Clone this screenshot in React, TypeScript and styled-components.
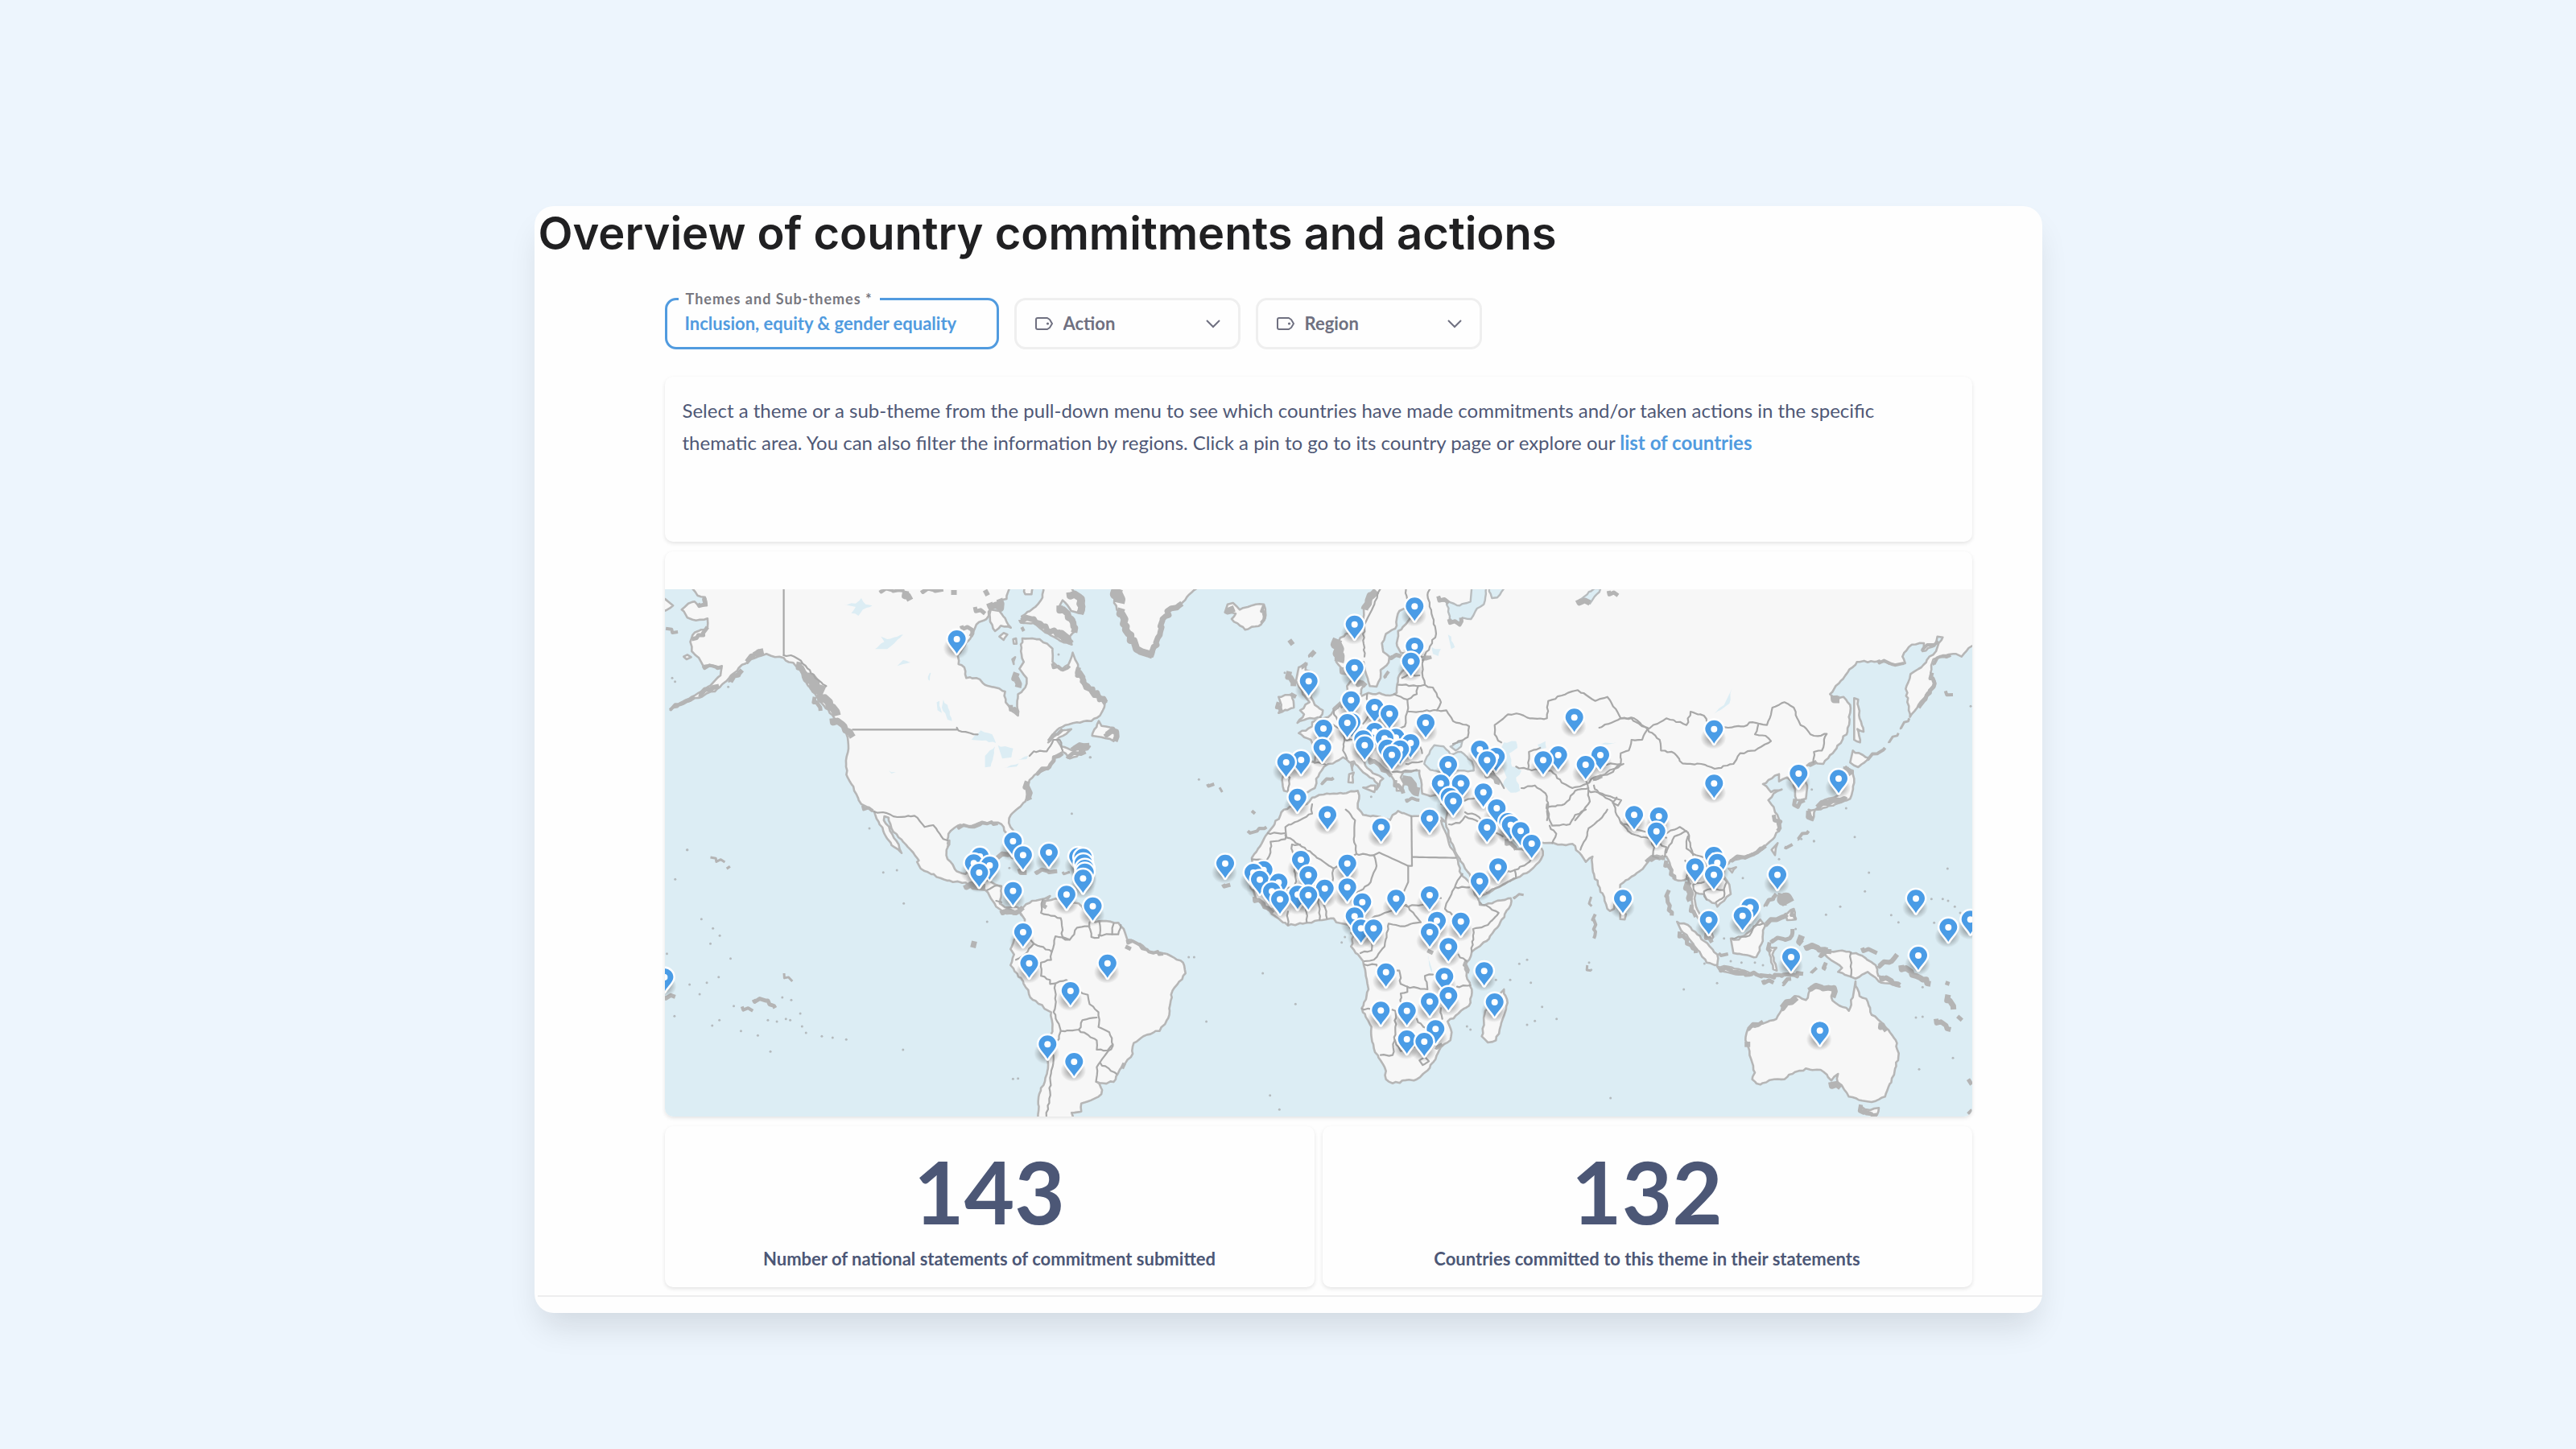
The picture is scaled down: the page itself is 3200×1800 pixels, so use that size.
import React from "react";
import styled, { createGlobalStyle } from "styled-components";

const GlobalStyle = createGlobalStyle`
  *, *::before, *::after { box-sizing: border-box; }
  body {
    margin: 0;
    background: #edf5fd;
    font-family: Lato, "Liberation Sans", sans-serif;
    color: #4f5876;
  }
`;

const Page = styled.main`
  display: flex;
  justify-content: center;
  min-height: 100vh;
  padding: 256px 24px 120px;
`;

const Sheet = styled.article`
  display: flex;
  flex-direction: column;
  align-self: flex-start;
  width: 100%;
  max-width: 1873px;
  padding-bottom: 20px;
  border-radius: 24px;
  background: #fefefe;
  box-shadow: 0 24px 40px -8px rgba(10, 20, 20, 0.12);
`;

const Title = styled.h1`
  margin: 0;
  padding: 0 5px;
  font-family: Inter, "Liberation Sans", sans-serif;
  font-size: 56px;
  line-height: 68px;
  font-weight: 600;
  color: #202022;
`;

const Content = styled.div`
  display: flex;
  flex-direction: column;
  gap: 12px;
  padding: 46px 87px 10px 162px;
`;

const Filters = styled.form`
  display: flex;
  flex-wrap: wrap;
  gap: 19px;
  margin-bottom: 22px;
`;

const Field = styled.div<{ $active?: boolean }>`
  position: relative;
  display: flex;
  align-items: center;
  width: ${(p) => (p.$active ? 415 : 281)}px;
  height: 64px;
  border: 3px solid ${(p) => (p.$active ? "#519bdf" : "#efefef")};
  border-radius: 14px;
  color: ${(p) => (p.$active ? "#519bdf" : "#6f7080")};
`;

const FloatingLabel = styled.label`
  position: absolute;
  top: -12px;
  left: 14px;
  padding: 0 9px;
  background: #fefefe;
  font-size: 18px;
  line-height: 20px;
  font-weight: 700;
  letter-spacing: 1px;
  color: #77777f;
`;

const Select = styled.select<{ $inset: number }>`
  appearance: none;
  width: 100%;
  height: 100%;
  padding: 0 40px 0 ${(p) => p.$inset}px;
  border: 0;
  border-radius: 12px;
  background: transparent;
  color: inherit;
  font: 700 22px/28px Lato, "Liberation Sans", sans-serif;
`;

const FieldIcon = styled.svg<{ $end?: boolean }>`
  position: absolute;
  ${(p) => (p.$end ? "right: 22px;" : "left: 23px;")}
  pointer-events: none;
  fill: none;
  stroke: currentColor;
`;

const Panel = styled.section`
  border-radius: 10px;
  background: #fefefe;
  box-shadow: 0 2px 5px rgba(0, 0, 0, 0.11);
`;

const Intro = styled(Panel)`
  min-height: 205px;
  padding: 22px 44px 22px 22px;
`;

const IntroText = styled.p`
  margin: 0;
  font-size: 24px;
  line-height: 40px;
`;

const Link = styled.a`
  color: #519bdf;
  font-weight: 700;
  text-decoration: none;
`;

const MapPanel = styled(Panel)`
  padding-top: 47px;
  overflow: hidden;
`;

const MapDrawing = styled.svg`
  display: block;
  width: 100%;
  height: auto;
  background: #dcedf4;
`;

const Stats = styled.div`
  display: grid;
  grid-template-columns: 1fr 1fr;
  gap: 10px;
`;

const Stat = styled(Panel)`
  display: flex;
  flex-direction: column;
  align-items: center;
  gap: 6px;
  padding: 16px 16px 20px;
`;

const StatNumber = styled.strong`
  font-size: 108px;
  line-height: 128px;
  font-weight: 700;
  color: #4c5776;
`;

const StatLabel = styled.span`
  font-size: 22px;
  line-height: 30px;
  font-weight: 700;
  color: #4c5776;
`;

const Divider = styled.hr`
  align-self: stretch;
  height: 2px;
  margin: 0 0 0 4px;
  border: 0;
  background: #ededee;
`;

/* ---------- Map geometry ---------- */

type Point = [number, number];

/* Shapes are digitised per map sheet; each sheet has its own origin and scale. */
const sheet =
  (ox: number, oy: number, sx: number, sy = 3) =>
  (text: string): Point[] =>
    text
      .trim()
      .split(/\s+/)
      .map((pair) => {
        const [x, y] = pair.split(",").map(Number);
        return [ox + x / sx, oy + y / sy];
      });

const NA = sheet(820, 720, 2.8);
const SA = sheet(820, 1040, 2.24);
const AT = sheet(1340, 720, 3);
const AF = sheet(1500, 1000, 3);
const EU = sheet(1560, 720, 3);
const AS = sheet(1980, 720, 3);
const OC = sheet(1960, 1040, 3);

/* Breaks long coast segments into small irregular steps, always the same way. */
const roughen = (points: Point[], amount: number): Point[] => {
  let seed = 7;
  const random = () => {
    seed = (seed * 16807) % 2147483647;
    return seed / 2147483647 - 0.5;
  };
  const out: Point[] = [];
  points.forEach((a, i) => {
    out.push(a);
    const b = points[i + 1];
    if (!b) return;
    const length = Math.hypot(b[0] - a[0], b[1] - a[1]);
    const steps = Math.min(24, Math.floor(length / 4));
    for (let s = 1; s < steps; s++) {
      out.push([
        a[0] + ((b[0] - a[0]) * s) / steps + random() * amount,
        a[1] + ((b[1] - a[1]) * s) / steps + random() * amount,
      ]);
    }
  });
  return out;
};

const path = (points: Point[], closed = false, amount = 2.4) =>
  "M" +
  roughen(points, amount)
    .map(([x, y]) => `${x.toFixed(1)} ${y.toFixed(1)}`)
    .join("L") +
  (closed ? "Z" : "");

const land: Point[][] = [
  [
    ...NA("112,0 112,36 130,62 156,68 162,100 132,98 120,85 98,92 75,115 95,145 125,155 165,148 165,182 120,200 105,235 110,270 135,295 150,325 215,325 210,360 175,398 110,440 35,485 60,478 120,445 190,420 240,370 285,320 340,290 370,280 400,292 430,295 480,330 510,390 545,440 590,500 640,560 652,590 655,620 647,690 652,740 675,790 700,840 745,868 760,905 785,960 815,1000 840,1022 830,990 800,940 778,900 780,885 795,890 805,930 845,980 880,1020 900,1050"),
    ...SA("715,95 725,120 780,155 815,170 850,172 870,195 905,200 920,230 935,262 965,288 985,290 1000,280 1012,300 1020,275 985,262 960,265 945,250 950,190 915,165 890,160 905,110 915,75 880,70 865,110 850,140 825,130 800,85 797,50 805,15"),
    ...NA("1000,1000 1003,950 1035,920 1085,920 1120,905 1175,908 1195,925 1215,975 1232,990 1235,950 1213,910 1220,880 1270,830 1285,750 1310,725 1355,700 1370,665 1400,645 1425,670 1470,650 1495,625 1440,640 1395,625 1380,600 1420,570 1430,560 1400,565 1350,610 1370,575 1410,545 1450,535 1500,530 1530,510 1540,490 1550,450 1510,430 1480,390 1460,345 1435,275 1420,320 1395,340 1365,310 1365,260 1320,225 1260,222 1255,270 1265,310 1250,335 1275,370 1270,405 1245,430 1245,510 1220,490 1202,460 1200,420 1130,395 1100,370 1065,370 1058,330 1038,318 1035,285 1060,250 1085,210 1100,170 1135,150 1150,110 1165,90 1205,75 1215,36 1215,0"),
  ],
  NA("0,62 28,85 45,100 20,118 0,125"),
  NA("1335,0 1330,70 1305,105 1258,140 1262,165 1300,165 1340,200 1390,230 1432,245 1425,215 1445,195 1440,150 1390,100 1400,80 1430,120 1470,130 1475,80 1440,50 1420,0"),
  NA("1150,115 1148,160 1165,195 1185,175 1220,182 1205,160 1180,120"),
  NA("1180,215 1195,202 1208,208 1195,228"),
  NA("1228,225 1238,222 1240,242 1230,242"),
  NA("1225,300 1235,292 1230,318"),
  NA("82,290 95,283 108,292 92,300"),
  NA("1268,30 1270,58 1292,58 1298,30"),
  AT("50,585 75,530 85,548 130,555 145,585 130,605 85,590"),
  AT("130,0 132,90 160,150 180,210 215,265 275,290 295,230 315,150 340,110 385,90 410,60 440,36 440,0"),
  AT("545,125 585,130 570,150 620,190 680,170 697,135 690,95 660,95 630,105 600,115 575,90 555,95"),
  SA("1000,280 1012,262 1035,240 1070,232 1085,222 1075,240 1100,232 1165,250 1190,290 1210,320 1240,315 1275,322 1290,345 1300,385 1335,400 1360,430 1410,438 1455,470 1462,510 1440,550 1422,590 1418,650 1405,700 1390,725 1345,745 1318,770 1315,810 1285,860 1262,915 1235,920 1215,915 1230,945 1220,970 1190,988 1172,995 1172,1025 1145,1030 1150,1060 1050,1060 1055,960 1072,900 1080,850 1085,770 1092,700 1088,655 1030,600 1010,540 975,480 985,440 975,420 985,385 1005,350 1015,310"),
  [
    ...AT("1100,0 1100,45 1078,80 1062,110 1060,150 1020,190 975,220 958,250 960,310 985,345 1040,340 1062,310 1068,345 1085,400 1110,402 1125,370 1125,340 1155,312 1158,290 1135,272 1130,240 1145,205 1180,185 1195,120 1215,110 1240,140 1220,168 1190,195 1185,240 1200,275 1240,290 1310,290 1250,312 1205,345 1190,370 1185,410 1185,425 1160,435 1130,430 1080,425 1045,440 1060,400 1050,380 1015,380 1000,400 1000,430 975,465 950,490 930,515 900,525 870,535 870,550 820,575 840,590 865,600 885,650 880,680 830,685 790,680 768,690 760,740 765,790 785,795 810,805 845,800 880,780 885,745 905,715 930,690 960,680 985,665 1010,685 1025,680 1050,710 1085,740 1115,765 1110,785 1120,770 1135,745 1110,730 1075,705 1055,670 1060,650 1085,670 1120,690 1155,720 1175,750 1185,790 1205,790 1215,760 1200,740 1210,720 1250,715 1270,715 1272,740 1280,800 1310,810 1345,805 1370,830 1372,880 1368,905"),
    ...AF("890,85 905,130 930,190 960,240 990,285 1010,330 1015,345 1050,330 1100,300 1150,275 1200,250 1225,225 1250,190 1245,165 1210,165 1180,172 1150,168 1130,140 1100,100 1120,95 1160,110 1200,135 1255,145 1290,145 1320,150 1360,148 1385,180 1410,215 1435,195 1435,240 1455,300 1480,360"),
    ...OC("110,270 120,278 135,270 145,240 160,210 158,180 200,150 250,110 270,85 300,80 330,75 345,110 360,160 385,165 410,155 415,200 425,240 430,280 445,300 480,350 495,390 505,375 490,330 455,290 440,260 435,230 440,210 470,215 480,235 515,250 520,262 545,240 570,215 565,180 545,150 545,120 570,88 600,85 640,70 680,55 715,20"),
    ...AS("690,940 695,905 675,870 670,850 650,825 670,800 700,785 660,795 630,765 650,750 690,728 690,755 720,740 745,760 755,825 790,820 795,780 785,740 790,700 820,682 855,690 890,650 945,570 955,500 955,470 930,440 905,450 880,430 920,380 980,310 1060,308 1110,318 1160,315 1150,290 1185,245 1230,240 1225,270 1270,250 1280,215 1300,218 1285,240 1275,270 1250,290 1220,330 1180,355 1165,400 1168,460 1178,515 1205,480 1235,440 1255,410 1270,380 1255,350 1265,300 1300,285 1350,280 1370,290 1410,250 1470,230 1470,0"),
  ],
  AT("820,330 850,315 845,340 875,350 865,440 880,470 910,490 900,515 850,522 815,537 840,505 825,490 860,460 835,430 810,380"),
  AT("745,440 795,430 802,480 745,500 755,470"),
  AT("1060,778 1105,770 1102,795"),
  AT("1008,728 1025,722 1022,760 1005,758"),
  AT("1015,690 1024,688 1020,715"),
  [
    ...AT("870,815 925,800 985,800 1040,790 1045,820 1040,855 1060,880 1110,885 1160,900 1170,880 1190,865 1240,885 1290,890 1350,890 1365,905"),
    ...AF("870,60 880,90 905,160 930,200 945,260 975,290 1005,345 1015,375 1060,370 1130,350 1130,375 1080,460 1040,510 985,550 960,600 965,640 985,690 980,740 935,780 895,810 910,850 905,880 870,905 850,950 810,1000 780,1025 690,1040 665,1025 660,980 620,910 605,820 575,760 600,690 590,640 580,585 535,530 545,480 525,450 480,440 470,425 440,430 370,442 300,452 240,410 180,350 160,300 165,200 215,120 250,75"),
    ...AT("755,870 800,845 850,840 870,815"),
  ],
  AF("1105,690 1118,740 1100,800 1075,880 1045,888 1022,865 1030,810 1035,770 1060,740"),
  OC("158,285 180,290 175,310 158,308"),
  OC("370,318 410,330 470,390 520,440 520,480 480,470 430,400 385,350"),
  OC("520,485 560,485 620,500 650,517 600,515 530,500"),
  OC("570,380 600,385 650,345 680,310 700,330 690,350 685,400 665,450 580,435"),
  OC("712,410 740,415 725,440 742,500 728,495 715,440"),
  OC("775,290 805,270 812,310 780,312"),
  OC("890,410 940,430 985,425 1060,445 1110,480 1120,520 1200,560 1130,545 1080,505 1035,530 970,505 985,490 930,450"),
  OC("1035,540 1050,595 1075,605 1095,665 1140,700 1185,760 1195,820 1180,880 1145,970 1095,990 1060,985 1010,970 985,930 965,930 970,885 945,910 905,870 850,865 800,885 770,905 715,908 680,925 650,905 660,880 640,800 625,760 635,715 740,680 770,625 810,595 850,610 870,565 955,565 945,600 960,620 1010,650 1025,600"),
  OC("1058,1008 1090,1020 1122,1012 1115,1038 1075,1036"),
  OC("745,25 735,70 722,50"),
  OC("562,120 590,115 575,135"),
  AS("965,640 1025,668 985,702 955,685"),
  AS("940,700 965,715 970,760 955,820 900,840 830,860 850,830 905,810 935,770"),
  AS("800,860 825,860 815,900"),
  AS("970,445 985,450 990,520 1005,570 982,560 992,610 970,600"),
];

const seas: Point[][] = [
  EU("628,690 650,640 665,620 700,625 725,655 765,645 805,680 812,715 740,716 700,722 650,712"),
  EU("725,625 770,602 765,625 745,640"),
  EU("805,30 860,30 850,95 825,110 802,150 770,145 760,175 722,150 712,85 760,100 800,85"),
  EU("870,30 880,72 900,70 925,36 925,30"),
  EU("1262,36 1205,80 1245,92 1285,36"),
];

const lakes: Point[][] = [
  NA("640,95 680,92 700,72 715,95 738,100 705,115 690,138 665,128 680,105"),
  NA("748,262 780,235 768,215 790,225 845,208 815,240 790,262"),
  NA("825,325 845,303 870,312 845,318"),
  NA("932,375 938,350 942,352 938,380"),
  NA("962,460 972,455 980,500 965,490"),
  NA("985,450 1000,470 1015,530 1000,525 980,480"),
  NA("1083,600 1115,565 1155,580 1168,612 1120,603"),
  NA("1130,660 1165,625 1150,700 1130,703"),
  NA("1175,620 1228,632 1222,665 1190,670"),
  NA("1195,705 1248,688 1240,700"),
  NA("1245,675 1280,660 1275,672"),
  NA("795,715 820,720 805,726"),
  EU("925,610 970,605 975,630 945,650 955,700 990,715 970,740 985,790 950,797 920,770 935,740 915,700 935,670 910,640"),
  EU("655,255 690,262 680,288 660,280"),
  EU("716,208 728,215 742,255 728,262"),
  EU("1275,615 1345,610 1310,618"),
  EU("1050,618 1080,605 1082,630 1060,635"),
  AS("515,408 505,465 448,503 490,460"),
  AF("870,520 885,515 885,545 870,545"),
  AF("822,560 832,600 838,630 826,600"),
];

const borders: Point[][] = [
  NA("430,285 455,285 490,305 540,370 578,400"),
  NA("1032,555 1050,570 1105,580"),
  NA("1285,660 1300,643 1345,643 1368,600 1390,600 1400,640"),
  NA("745,868 775,870 825,888 885,883 920,925 950,918 985,970 1000,975"),
  SA("1065,235 1060,285 1115,305 1120,375 1140,385 1160,340 1195,335"),
  SA("1195,320 1200,375 1220,378 1225,350 1222,315"),
  SA("1220,368 1255,365 1275,365 1282,330"),
  SA("1262,325 1258,365"),
  SA("1140,385 1100,372 1090,430 1040,400 1030,385"),
  SA("1090,430 1088,460 1060,470 1060,520 1085,535 1085,550 1100,548 1130,535 1175,585 1190,590 1195,625 1220,655 1220,710 1250,730 1260,780 1225,840 1215,860 1213,915"),
  SA("1100,548 1100,630 1095,655 1105,690 1115,725 1165,720 1175,685 1215,675"),
  SA("1165,720 1215,760 1215,795 1245,798 1260,775"),
  SA("1225,845 1270,885"),
  SA("1115,725 1110,755 1090,790 1095,830 1085,900 1085,950 1075,1045"),
  SA("1040,400 1015,440 990,460"),
  SA("910,200 930,185 950,185"),
  SA("935,240 950,245"),
  AT("1125,36 1085,130 1065,170 1060,230 1065,290"),
  AT("1220,36 1225,80"),
  EU("650,36 640,60 655,130 672,205 630,285"),
  EU("625,300 620,350 630,395 600,400 530,395"),
  EU("610,360 570,355 545,370"),
  EU("605,400 600,430 565,450 515,430"),
  EU("630,395 660,405 690,460 675,490 610,495 565,495 565,450"),
  EU("675,490 710,490 735,530 795,550 790,590 735,615"),
  EU("565,495 555,550 520,560"),
  EU("415,430 425,500 400,540"),
  EU("290,490 300,515 330,590 325,640 340,670"),
  EU("330,600 370,600 400,640"),
  EU("240,515 290,545 320,560"),
  EU("605,600 620,650"),
  EU("210,680 260,692"),
  EU("105,722 127,740 120,790"),
  EU("560,690 620,680"),
  EU("530,720 600,712"),
  EU("480,640 510,720 540,720"),
  EU("915,610 890,580 890,545 940,505 985,505 1020,520 1085,520 1090,455 1140,435 1200,415 1265,455 1310,440 1360,520 1400,520 1440,550 1460,555"),
  AS("200,560 180,600 140,600 130,640 100,650 100,690 50,720 0,750"),
  AS("40,690 100,690"),
  AS("20,555 100,520 150,520 200,560"),
  AS("200,560 270,520 345,545 360,495 410,510 430,550 500,555 560,550 580,535 645,545 665,480 710,460 745,480 770,545 820,585 868,578 850,640 820,645 818,685"),
  AS("200,560 245,600 250,640 300,650 330,688 400,690 450,708 520,690 545,650 600,640 660,605 640,585 600,580 612,545"),
  EU("970,700 1015,710 1018,645 1060,630"),
  EU("1018,710 1100,715 1140,760 1180,780 1230,765 1260,740 1310,730 1370,690"),
  EU("990,780 1040,770 1080,800 1090,850 1150,840 1190,790 1240,780"),
  EU("1240,790 1290,800 1345,820 1362,825 1350,845 1330,835 1345,815"),
  EU("1240,790 1245,830 1190,900"),
  EU("1090,850 1085,900"),
  EU("1220,700 1240,790"),
  AF("1265,0 1275,60 1285,80 1350,75 1370,40 1410,20"),
  AF("1275,80 1300,110 1285,145"),
  AF("1390,170 1410,130 1420,90 1470,50 1490,20"),
  AS("0,770 20,800 70,830 85,880 100,910 140,950 210,970 225,985"),
  AS("100,905 160,935 205,945 270,965"),
  AS("215,970 225,1000 220,1035 240,1040"),
  AS("245,985 270,1000 265,1035"),
  AS("265,950 320,925 350,945 360,1000 370,1030"),
  AS("270,1020 300,960 345,940"),
  OC("410,0 405,45 440,70 480,80"),
  OC("405,160 420,110 400,90"),
  OC("440,210 430,180 470,170"),
  OC("480,235 470,205 500,195 545,200 545,225 515,245"),
  OC("545,205 555,170 520,130"),
  OC("575,380 640,370 655,335 690,325"),
  OC("1018,432 1018,522"),
  EU("690,840 740,835 800,820 860,810 900,830"),
  EU("860,690 900,740 925,780"),
  EU("780,870 820,880 860,910"),
  AF("900,75 940,70 960,45 1000,60 1100,120"),
  AF("1040,330 1150,275 1145,245 1200,215 1215,165"),
  AF("1145,245 1085,262"),
  AF("390,0 390,35 290,85 290,130 235,140 235,180 220,210 165,205"),
  AF("225,108 288,108"),
  AF("290,115 440,220 470,240 555,185 545,130 550,60 515,20"),
  AF("315,150 330,310 240,310"),
  AF("315,150 345,150"),
  AF("470,240 465,290 380,320"),
  AF("555,185 620,190 630,230 600,300 555,330"),
  AF("950,260 925,300 890,370 885,390 940,440"),
  AF("925,310 975,310"),
  AF("740,380 800,375 870,350"),
  AF("600,430 660,405 740,375 795,440 720,455 675,445 660,530 620,580 585,585"),
  AF("535,480 610,500 612,545 570,555"),
  AF("1015,365 1085,405 1045,450 990,465 985,550"),
  AF("435,360 445,425"),
  AF("415,350 418,430"),
  AF("370,380 370,440"),
  AF("300,400 300,450"),
  AF("585,598 630,598 640,640 715,620 720,670 745,680 745,700 720,705 718,770"),
  AF("745,680 820,690 810,640 840,635"),
  AF("575,762 700,770 700,830 690,935 645,935"),
  AF("700,880 720,920 780,900"),
  AF("930,680 980,675"),
  AF("870,760 875,800"),
  AF("780,800 805,830 850,850"),
  AF("935,560 965,585"),
  AF("790,955 810,942 825,958 802,972 790,955"),
];

const straightBorders: Point[][] = [
  NA("430,36 430,285"),
  NA("670,562 1032,562"),
  AF("620,190 640,180 748,230 748,290 730,330"),
  AF("760,45 762,230 748,230"),
  AF("765,197 925,200"),
];

/* Fjords and island chains read as broad grey bands at this zoom. */
const bands: [number, Point[]][] = [
  [9, NA("332,268 360,272")],
  [6, NA("245,385 285,340")],
  [6, NA("135,430 185,405 205,400")],
  [4, NA("35,485 120,440")],
  [6, NA("300,310 330,285")],
  [5, NA("165,180 150,210 110,225")],
  [5, NA("132,92 158,95 155,70")],
  [4, NA("150,325 215,330")],
  [4, NA("20,185 40,188 62,198")],
  [7, NA("485,310 500,350 520,385")],
  [13, NA("515,350 545,410 570,420")],
  [10, NA("560,430 600,480 615,510")],
  [8, NA("600,520 640,550 670,590")],
  [5, NA("538,440 558,492")],
  [4, NA("765,42 850,42")],
  [8, NA("855,45 870,80")],
  [5, NA("910,42 985,40")],
  [7, NA("1022,42 1022,60")],
  [6, NA("1130,42 1140,62")],
  [8, NA("1145,90 1185,110 1180,75")],
  [5, NA("1095,105 1130,130")],
  [5, NA("1048,175 1085,190 1080,215")],
  [7, NA("1255,150 1300,150 1345,190 1400,215 1430,240")],
  [8, NA("1390,100 1430,150 1440,200")],
  [9, NA("1425,50 1465,75 1460,130")],
  [8, NA("1380,190 1420,225")],
  [4, NA("1258,180 1265,195")],
  [8, NA("1240,350 1245,405")],
  [5, NA("1220,470 1245,500")],
  [6, NA("1455,340 1475,390 1510,435 1550,460")],
  [4, NA("1365,315 1400,340 1425,325")],
  [7, NA("1435,625 1490,625")],
  [5, NA("1415,660 1480,645")],
  [5, NA("1310,725 1355,700 1370,665 1400,650")],
  [7, NA("1278,755 1285,825")],
  [4, NA("1035,920 1085,925 1120,910 1175,912")],
  [4, NA("1350,605 1400,560")],
  [4, NA("705,845 740,865")],
  [6, AT("0,330 20,390 75,440 100,465")],
  [7, AT("100,575 140,570 135,605")],
  [6, AT("0,640 40,620")],
  [14, AT("145,36 150,90")],
  [9, AT("160,110 175,190 215,262 275,285")],
  [7, AT("275,285 295,220 312,150 345,110 385,92")],
  [8, AT("550,115 580,110")],
  [4, AT("690,100 692,140 680,165")],
  [6, AT("785,228 798,245")],
  [6, AT("865,290 880,270")],
  [5, AT("830,330 850,315")],
  [7, AT("785,345 800,400")],
  [5, AT("745,460 755,495")],
  [5, AT("790,430 810,440")],
  [9, AT("1110,45 1080,80 1065,115")],
  [12, AT("965,225 970,310")],
  [6, AT("980,330 1000,350")],
  [5, AT("950,490 975,465 985,480")],
  [6, AT("1040,380 1070,400")],
  [5, AT("1160,288 1240,290")],
  [4, AT("1290,290 1315,292")],
  [4, AT("1145,370 1155,345")],
  [5, AT("1085,670 1125,700 1165,735")],
  [5, AT("1180,750 1210,800")],
  [11, AT("1225,735 1245,780 1270,795")],
  [4, AT("1220,820 1270,825")],
  [4, AT("905,760 950,742")],
  [4, AT("630,940 665,940 700,925")],
  [4, AT("480,765 505,765")],
  [3, AT("525,778 535,795")],
  [4, AT("645,865 657,875")],
  [4, AT("1340,65 1370,80")],
  [5, EU("680,65 720,90")],
  [5, EU("720,150 760,170 765,145")],
  [7, EU("1200,78 1245,90")],
  [5, EU("1315,45 1350,62")],
  [6, EU("860,720 910,760")],
  [5, EU("1260,740 1290,735")],
  [6, SA("935,75 975,65 1000,85")],
  [6, SA("1000,120 1020,135")],
  [5, SA("1045,128 1105,130")],
  [3, SA("1120,132 1140,133")],
  [7, SA("850,180 905,188")],
  [6, SA("950,275 990,285 1010,265")],
  [5, SA("1070,235 1075,265")],
  [4, SA("1300,385 1335,405 1360,430 1400,438")],
  [5, SA("1295,410 1310,420")],
  [5, SA("1285,865 1292,845")],
  [8, SA("865,400 880,405")],
  [3, SA("140,78 155,82 180,96")],
  [5, SA("188,112 192,120")],
  [5, SA("14,595 42,598")],
  [5, SA("260,608 300,612 320,640")],
  [4, SA("228,634 258,650")],
  [3, SA("345,510 368,540")],
  [5, AF("58,298 85,300")],
  [5, AF("175,345 245,405")],
  [5, AF("850,905 875,895")],
  [5, AF("820,545 840,555")],
  [5, AF("1115,130 1150,170")],
  [3, AF("1140,345 1178,338")],
  [3, AF("1430,345 1432,380")],
  [4, AF("1445,410 1440,500")],
  [3, AF("1415,600 1430,620")],
  [4, AF("965,580 968,630")],
  [9, AS("895,435 915,450")],
  [4, AS("1060,302 1110,318 1155,315")],
  [4, AS("1220,262 1285,235")],
  [5, AS("1260,350 1270,390 1240,435 1210,480")],
  [4, AS("1270,320 1290,290 1330,285")],
  [4, AS("1310,418 1338,432")],
  [4, AS("1020,672 1085,630")],
  [3, AS("1100,612 1135,575")],
  [3, AS("1145,560 1175,520")],
  [7, AS("940,700 960,730")],
  [7, AS("830,850 890,825 940,825")],
  [6, AS("800,865 815,895")],
  [5, AS("750,820 760,850 785,825")],
  [4, AS("760,970 800,940")],
  [4, AS("710,1000 740,990")],
  [5, AS("670,880 695,905 685,940")],
  [5, AS("210,1040 265,1040")],
  [5, AS("800,690 830,682")],
  [5, OC("255,85 320,75")],
  [5, OC("330,90 360,160")],
  [5, OC("570,85 640,72 700,35")],
  [8, OC("412,170 420,240")],
  [5, OC("425,255 440,300")],
  [5, OC("340,200 335,245 350,295")],
  [5, OC("480,360 500,395")],
  [5, OC("380,355 440,435")],
  [4, OC("525,435 560,438")],
  [5, OC("530,490 640,515 760,520 840,512")],
  [5, OC("690,535 730,545")],
  [5, OC("765,550 795,530")],
  [16, OC("770,215 785,250")],
  [5, OC("700,260 740,215")],
  [6, OC("700,325 780,290")],
  [4, OC("800,275 812,310")],
  [5, OC("720,385 790,380 800,345")],
  [5, OC("715,395 720,430")],
  [8, OC("835,370 835,400")],
  [7, OC("850,405 930,425")],
  [6, OC("900,440 945,430")],
  [5, OC("925,470 925,495")],
  [4, OC("870,510 890,490")],
  [5, OC("1060,415 1115,435")],
  [6, OC("1120,480 1170,465 1190,440")],
  [6, OC("1130,520 1200,555")],
  [7, OC("1205,480 1260,520 1315,550")],
  [5, OC("1370,545 1385,550")],
  [7, OC("1380,590 1400,645")],
  [5, OC("1415,670 1432,685")],
  [6, OC("1335,680 1390,720")],
  [5, OC("1455,905 1468,925")],
  [5, OC("1455,1035 1470,1020")],
  [8, OC("760,640 815,600")],
  [7, OC("865,560 955,565 950,600")],
  [5, OC("635,715 690,690")],
  [7, OC("632,765 632,785")],
  [6, OC("1130,695 1150,725")],
  [8, OC("945,915 980,935")],
  [5, OC("1055,1000 1065,1030 1115,1038")],
];

const islets: Point[] = [
  ...NA("42,370 52,383 237,403 728,930 95,1010 1432,875 1497,665 1386,282"),
  ...SA("75,50 42,160 115,308 147,343 166,370 140,400 196,455 163,524 82,552 130,545 110,588 40,670 165,685 145,705 225,725 272,742 307,802 340,600 365,610 390,660 350,680 395,708 406,732 450,745 480,750 518,757 676,795 996,902 982,904 910,318 678,250 659,126 621,134 1520,690 1471,450 1486,450 972,118 19,437 300,685 325,690 362,685 205,632"),
  ...AT("448,748 42,665 768,350 1090,812"),
  ...AF("206,630 328,745 233,1085 268,1138 500,515 512,495 1191,580 1162,595 1205,665 1128,655 1247,755 1301,800 1191,822 1220,808 967,828 980,840 1075,655"),
  ...AS("972,962 940,855 820,978 690,1045 1404,475 812,785"),
  ...OC("395,570 519,547 472,474 42,470 50,497 122,975 925,292 978,262 1168,293 1195,320 1318,233 1360,233 1380,240 1405,262 1425,285 1328,322 1378,120 1085,135 1070,205 833,10 880,17 615,155 1272,868 1398,826 1260,675 1285,672 1285,562 545,380 812,345 570,465 610,470 660,470 690,480"),
];

const pins: Point[] = [
  ...NA("1032,225"),
  ...SA("982,18 1010,70 1082,60 890,75 873,100 917,108 888,135 1163,76 1177,79 1178,100 1182,120 1182,134 1177,157 982,203 1131,217 1204,260 1010,357 1027,473 1245,473 1142,576 1078,775 1152,840 12,525"),
  ...AT("1252,103 1028,170 1252,252 1238,308 1028,332 857,382 1015,452 1103,480 1158,503 912,558 1017,535 1001,537 1293,537 908,629 1103,570 1060,598 1066,620 1140,595 1182,592 1237,612 1150,632 1198,635 1167,656 829,675 773,684 815,815 927,880 1127,926 1308,893 1377,693 1349,763 1424,763 1382,812 1396,829"),
  ...EU("835,636 895,663 862,676 848,796 898,855 1187,517 1127,657 1071,676 1284,657 1229,693"),
  ...AF("1042,87 1120,66 1130,77 1167,100 1208,147 1083,235 1014,287 66,221 209,245 171,255 195,281 265,292 240,325 270,355 348,207 376,264 336,337 376,339 437,314 521,221 521,310 577,365 703,352 828,339 548,418 572,463 619,463 855,434 944,437 828,477 898,532 665,626 883,643 1031,622 898,714 828,736 1070,738 646,769 743,770 850,838 743,876 808,885"),
  ...AS("448,560 448,763 763,726 912,745 150,880 242,885 233,941"),
  ...OC("507,72 520,98 437,115 507,143 744,143 168,232 488,311 642,265 614,296 1260,232 1381,339 1463,310 1269,444 795,450 902,724"),
].sort((a, b) => a[1] - b[1]);

const Pin = ({ at: [x, y] }: { at: Point }) => (
  <g transform={`translate(${x.toFixed(1)} ${y.toFixed(1)})`}>
    <ellipse cx="-1" cy="11" rx="16" ry="14" fill="url(#pin-shade)" />
    <path
      d="M0 18C-3 12-11 6-11 0A11 11 0 0 1 11 0C11 6 3 12 0 18Z"
      fill="#4a9ce6"
      stroke="#fff"
      strokeWidth="5"
      strokeLinejoin="round"
      paintOrder="stroke"
    />
    <circle r="4" fill="#fff" />
  </g>
);

const WorldMap = () => (
  <MapDrawing viewBox="826 733 1624 655" role="img" aria-hidden="true">
    <defs>
      <radialGradient id="pin-shade">
        <stop offset="0" stopColor="#333" stopOpacity="0.6" />
        <stop offset="1" stopColor="#333" stopOpacity="0" />
      </radialGradient>
    </defs>
    <g strokeLinejoin="round" strokeLinecap="round">
      <g fill="#f7f7f7" stroke="#b6b6b6" strokeWidth="2.6">
        {land.map((shape, i) => (
          <path key={i} d={path(shape, true)} />
        ))}
      </g>
      <g fill="#dcedf4" stroke="#b8bcbe" strokeWidth="2.4">
        {seas.map((shape, i) => (
          <path key={i} d={path(shape, true)} />
        ))}
      </g>
      <g fill="#dcedf4">
        {lakes.map((shape, i) => (
          <path key={i} d={path(shape, true)} />
        ))}
      </g>
      <g fill="none" stroke="#b4b4b4" strokeLinecap="butt">
        {bands.map(([width, line], i) => (
          <path key={i} d={path(line, false, 6)} strokeWidth={width} />
        ))}
      </g>
      <g fill="none" stroke="#a8a8a8" strokeWidth="2.2">
        {borders.map((line, i) => (
          <path key={i} d={path(line)} />
        ))}
        {straightBorders.map((line, i) => (
          <path key={i} d={path(line, false, 0)} />
        ))}
      </g>
      <g fill="#b4babd">
        {islets.map(([x, y], i) => (
          <circle key={i} cx={x} cy={y} r={1.5} />
        ))}
      </g>
    </g>
    {pins.map((at, i) => (
      <Pin key={i} at={at} />
    ))}
  </MapDrawing>
);

const TagIcon = () => (
  <FieldIcon width="22" height="16" viewBox="0 0 22 16" strokeWidth="2" strokeLinejoin="round">
    <path d="M3 1H15L18 3L21 8L18 13L15 15H3Q1 15 1 13V3Q1 1 3 1Z" />
    <circle cx="15.5" cy="8" r="1.6" fill="currentColor" stroke="none" />
  </FieldIcon>
);

const ChevronIcon = () => (
  <FieldIcon $end width="18" height="12" viewBox="0 0 18 12" strokeWidth="2">
    <path d="M1 2L9 10L17 2" />
  </FieldIcon>
);

const FilterSelect = ({ label }: { label: string }) => (
  <Field>
    <TagIcon />
    <Select $inset={58} aria-label={label} defaultValue="">
      <option value="">{label}</option>
    </Select>
    <ChevronIcon />
  </Field>
);

const stats = [
  { value: "143", label: "Number of national statements of commitment submitted" },
  { value: "132", label: "Countries committed to this theme in their statements" },
];

export default function App() {
  return (
    <>
      <GlobalStyle />
      <Page>
        <Sheet>
          <Title>Overview of country commitments and actions</Title>
          <Content>
            <Filters>
              <Field $active>
                <FloatingLabel htmlFor="theme">Themes and Sub-themes *</FloatingLabel>
                <Select id="theme" $inset={22} defaultValue="inclusion" required>
                  <option value="inclusion">Inclusion, equity &amp; gender equality</option>
                </Select>
              </Field>
              <FilterSelect label="Action" />
              <FilterSelect label="Region" />
            </Filters>
            <Intro>
              <IntroText>
                Select a theme or a sub-theme from the pull-down menu to see which countries have
                made commitments and/or taken actions in the specific thematic area. You can also
                filter the information by regions. Click a pin to go to its country page or explore
                our <Link href="#countries">list of countries</Link>
              </IntroText>
            </Intro>
            <MapPanel>
              <WorldMap />
            </MapPanel>
            <Stats>
              {stats.map((stat) => (
                <Stat key={stat.value}>
                  <StatNumber>{stat.value}</StatNumber>
                  <StatLabel>{stat.label}</StatLabel>
                </Stat>
              ))}
            </Stats>
          </Content>
          <Divider />
        </Sheet>
      </Page>
    </>
  );
}
